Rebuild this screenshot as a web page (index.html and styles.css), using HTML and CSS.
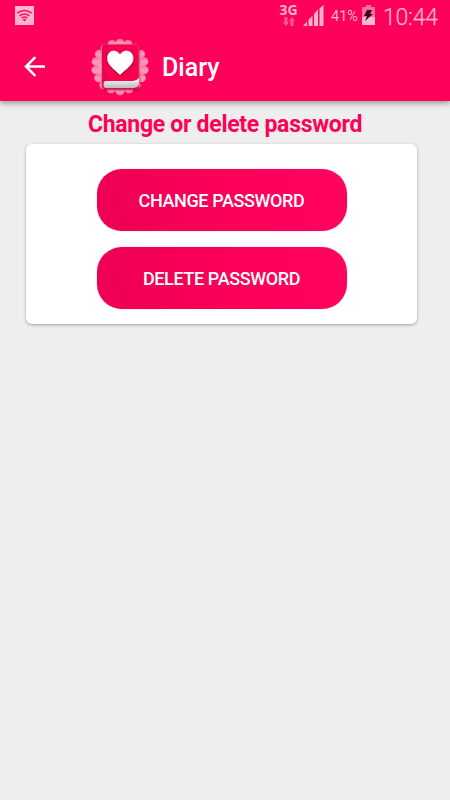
FILE: index.html
```html
<!DOCTYPE html>
<html lang="en">
  <head>
    <meta charset="UTF-8" />
    <meta name="viewport" content="width=device-width, initial-scale=1.0" />
    <title>Diary</title>
    <link rel="stylesheet" href="styles.css">
  </head>
  <body>
    <header class="header">
      <!-- Status bar -->
      <div class="status-bar">
        <svg class="wifi" width="19" height="19" viewBox="0 0 19 19">
          <rect width="19" height="19" fill="#ffb3cf" />
          <g fill="none" stroke="#f5145f" stroke-width="1.5">
            <path d="M2.3 7.2Q9.5 1.8 16.7 7.2" />
            <path d="M4.5 9.9Q9.5 6 14.5 9.9" />
            <path d="M6.6 12.2Q9.5 9.9 12.4 12.2" />
          </g>
          <path d="M7.5 13.2Q9.5 12.1 11.5 13.2L9.5 15.4Z" fill="#f5145f" />
        </svg>
        <div class="network">
          <span class="network-type">3G</span>
          <svg width="12" height="9" viewBox="0 0 12 9" fill="#ff5c95">
            <path d="M1.5 0h3v5H6L3 9L0 5h1.5zM7.5 9h3V4H12L9 0L6 4h1.5z" />
          </svg>
        </div>
        <svg class="signal" width="21" height="21" viewBox="0 0 21 21" fill="#ffb3cf">
          <path d="M0 21l4-4.5V21zM5.5 21v-6L9.500 10.500V21zM11 21V9l4-4.500V21zM16.500 21V3.500L20.500 0v21z" />
        </svg>
        <span class="percent">41%</span>
        <svg class="battery" width="13" height="20" viewBox="0 0 13 20">
          <path d="M4 0h5v2h4v18H0V2h4z" fill="#ff6c9f" />
          <path d="M0 12h13v8H0z" fill="#ffb8d1" />
          <path d="M5 5h5L8 9h3L3 16l2-5H2z" fill="#36071a" />
        </svg>
        <span class="clock">10:44</span>
      </div>

      <!-- Toolbar -->
      <div class="toolbar">
        <svg class="back" width="22" height="22" viewBox="0 0 22 22">
          <path d="M11.3 1.2L2 10.5l9.3 9.3M2 10.5h19" fill="none" stroke="#fff" stroke-width="2.5" />
        </svg>
        <svg class="logo" width="60" height="60" viewBox="0 0 60 60">
          <defs>
            <linearGradient id="lace" x1="0" y1="0" x2="0" y2="1">
              <stop offset="0" stop-color="#ff6a9a" />
              <stop offset="0.5" stop-color="#ff9bbd" />
              <stop offset="1" stop-color="#ff84aa" />
            </linearGradient>
            <linearGradient id="pages" x1="0" y1="0" x2="0" y2="1">
              <stop offset="0" stop-color="#fff" />
              <stop offset="1" stop-color="#b9bcbc" />
            </linearGradient>
            <filter id="soft" x="-20%" y="-20%" width="140%" height="140%">
              <feDropShadow dx="0.5" dy="1" stdDeviation="0.9" flood-color="#700026" flood-opacity="0.8" />
            </filter>
          </defs>
          <g fill="url(#lace)">
            <circle cx="30" cy="30" r="25" />
            <circle cx="30" cy="6" r="4.3" />
            <circle cx="38" cy="7.2" r="4.3" />
            <circle cx="45" cy="11" r="4.3" />
            <circle cx="50.7" cy="17" r="4.3" />
            <circle cx="54" cy="24.5" r="4.3" />
            <circle cx="54.2" cy="33" r="4.3" />
            <circle cx="51.5" cy="41" r="4.3" />
            <circle cx="46.3" cy="48" r="4.3" />
            <circle cx="39" cy="52" r="4.3" />
            <circle cx="30" cy="54" r="4.3" />
            <circle cx="21" cy="52" r="4.3" />
            <circle cx="13.7" cy="48" r="4.3" />
            <circle cx="8.5" cy="41" r="4.3" />
            <circle cx="5.8" cy="33" r="4.3" />
            <circle cx="6" cy="24.5" r="4.3" />
            <circle cx="9.3" cy="17" r="4.3" />
            <circle cx="15" cy="11" r="4.3" />
            <circle cx="22" cy="7.2" r="4.3" />
          </g>
          <path d="M14.5 7.5H46.500Q48.500 7.5 48.500 9.500V49Q48.500 52 45.500 52H16Q12 52 12 48V10Q12 7.5 14.5 7.5Z" fill="#fa0050" filter="url(#soft)" />
          <path d="M12 10Q12 7.5 14.500 7.5H18V44H16Q12 44 12 48Z" fill="#ec004f" />
          <path d="M16 44H43Q46 44 49 41V47.500Q47 51 43 51H16Q13.500 51 13.500 47.500T16 44Z" fill="url(#pages)" />
          <path d="M14 47.500H44Q46.500 47 48.500 45" stroke="#c9d3d2" stroke-width="1" fill="none" />
          <path d="M30 37.500C25 32.500 17.500 28 17.500 21.500C17.500 12.500 27 12 30 18C33 12 43 12.500 43 21.500C43 28 35 32.500 30 37.500Z" fill="#fff" stroke="#fff" stroke-width="0.6" filter="url(#soft)" />
        </svg>
        <h1 class="title">Diary</h1>
      </div>
    </header>

    <main class="content">
      <h2 class="heading">Change or delete password</h2>
      <div class="card">
        <button type="button" class="btn">CHANGE PASSWORD</button>
        <button type="button" class="btn">DELETE PASSWORD</button>
      </div>
    </main>
  </body>
</html>
```
FILE: styles.css
```css
body {
  margin: 0;
  min-height: 100vh;
  background-color: #eee;
  font-family: Roboto, sans-serif;
}

.header {
  height: 101px;
  background-color: #ff005a;
  box-shadow: 0 2px 6px rgba(0, 0, 0, 0.4);
}

/* Status bar */
.status-bar {
  display: flex;
  align-items: flex-start;
  height: 32px;
  color: #ffb3cf;
}

.wifi {
  margin: 6px 0 0 15px;
}

.network {
  display: flex;
  flex-direction: column;
  align-items: center;
  width: 19px;
  margin: 2px 0 0 245px;
}

.network-type {
  height: 15px;
  font-family: "Open Sans", sans-serif;
  font-size: 14px;
  font-weight: 700;
  line-height: 16px;
}

.signal {
  margin: 5px 1px 0 5px;
}

.percent {
  width: 31px;
  margin-top: 8px;
  padding-left: 6px;
  box-sizing: border-box;
  font-size: 14.5px;
  line-height: 18px;
}

.battery {
  margin: 5px 0 0 6px;
}

.clock {
  margin: 4px 0 0 8px;
  font-size: 23px;
  font-weight: 300;
  letter-spacing: -0.2px;
  line-height: 27px;
  -webkit-text-stroke: 0.25px #ffb3cf;
}

/* Toolbar */
.toolbar {
  display: flex;
  align-items: center;
  height: 69px;
}

.back {
  margin-left: 24px;
}

.logo {
  margin-left: 44px;
}

.title {
  margin: 2px 0 0 12px;
  color: #fff;
  font-size: 25px;
  font-weight: 500;
}

/* Content */
.content {
  padding: 9px 33px 0 26px;
}

.heading {
  margin: 0 -7px 4px 0;
  color: #ff0057;
  font-size: 23px;
  font-weight: 700;
  letter-spacing: -0.28px;
  line-height: 30px;
  text-align: center;
}

.card {
  display: flex;
  flex-direction: column;
  align-items: center;
  gap: 16px;
  height: 180px;
  padding-top: 25px;
  box-sizing: border-box;
  background-color: #fff;
  border-radius: 6px;
  box-shadow: 0 1px 3px rgba(0, 0, 0, 0.35);
}

.btn {
  width: 250px;
  height: 62px;
  padding: 0;
  border: none;
  border-radius: 25px;
  background: linear-gradient(75deg, #ed0053, #ff005c 70%, #ff055f);
  box-shadow: 0 0 1px rgba(150, 0, 50, 0.6);
  color: #fff;
  font-family: inherit;
  font-size: 18px;
  font-weight: 500;
  letter-spacing: -0.38px;
  cursor: pointer;
}
```
